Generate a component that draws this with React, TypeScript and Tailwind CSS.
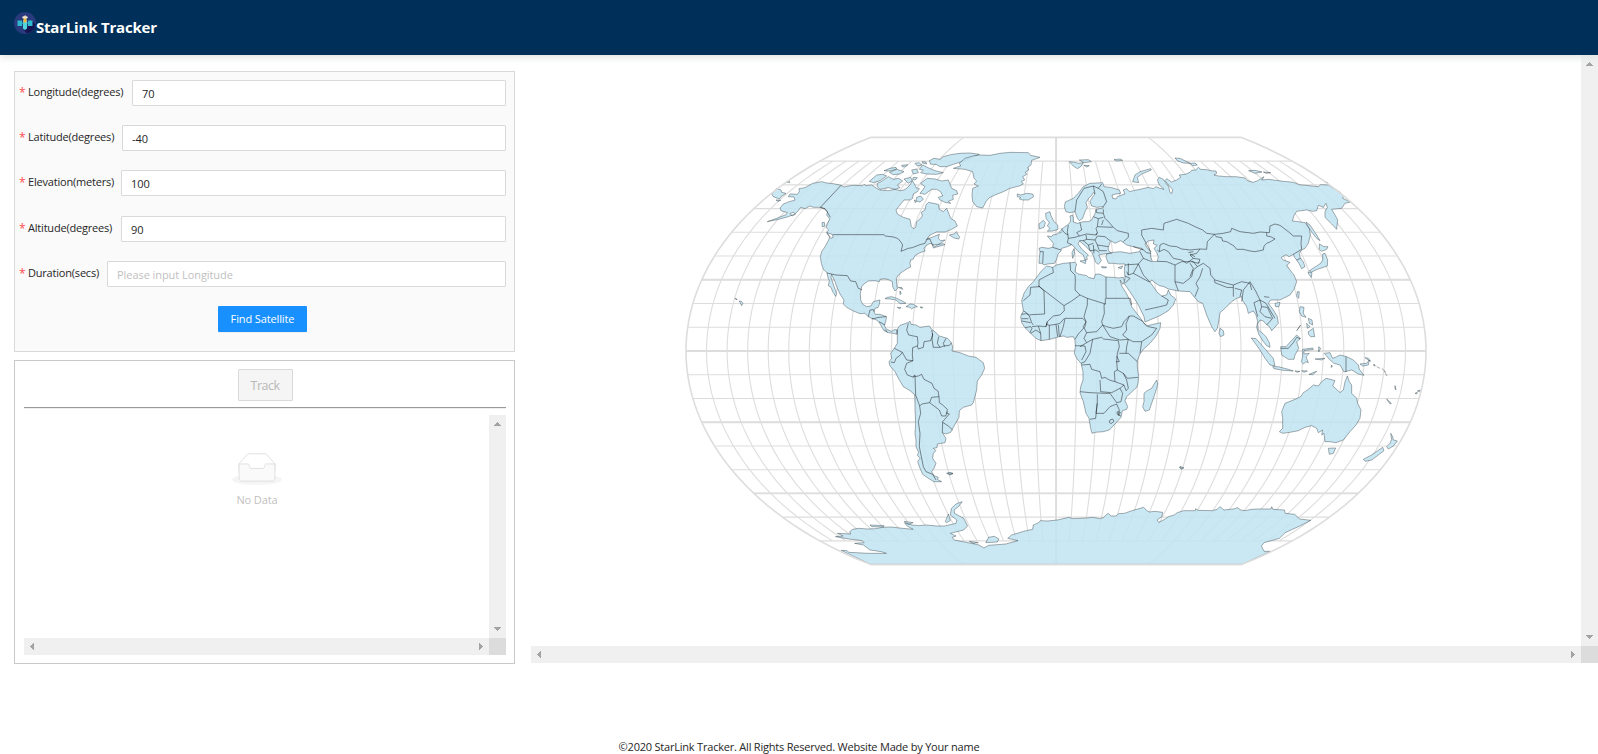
import React from "react";

const CX = 1056;
const CY = 351;
const SCALE = 136;
const RAD = Math.PI / 180;

// Kavrayskiy VII projection
function project(lon: number, lat: number): string {
  const l = lon * RAD;
  const p = lat * RAD;
  const x = ((3 * l) / (2 * Math.PI)) * Math.sqrt((Math.PI * Math.PI) / 3 - p * p);
  return `${(CX + SCALE * x).toFixed(2)},${(CY - SCALE * p).toFixed(2)}`;
}

function meridian(lon: number, limit: number): string {
  const pts: string[] = [];
  for (let lat = -limit; lat <= limit; lat += 2.5) pts.push(project(lon, lat));
  return "M" + pts.join("L");
}

function parallel(lat: number): string {
  return `M${project(-180, lat)}L${project(180, lat)}`;
}

function buildGraticule(): string {
  let d = "";
  for (let lon = -170; lon < 180; lon += 10) d += meridian(lon, lon % 90 === 0 ? 90 : 80);
  for (let lat = -80; lat <= 80; lat += 10) d += parallel(lat);
  return d;
}

function buildOutline(): string {
  return meridian(-180, 90) + "L" + meridian(180, 90).slice(1).split("L").reverse().join("L") + "Z";
}

const graticule = buildGraticule();
const majorLines = meridian(0, 90) + [-60, -30, 0, 30].map(parallel).join("");
const outline = buildOutline();

type Region = { at: string; land: string; borders: string };

const regions: Region[] = [
  {
    at: "translate(680 120) scale(0.33333)",
    land:
      "M357 206L375 203 398 190 425 185 440 189 460 191 483 196 492 201 505 198 520 196 548 197 552 193 558 197 575 195 590 205 600 210 625 212 645 208 660 212 672 210 680 205 690 195 697 182 705 195 708 203 718 206 712 215 700 222 698 235 690 240 672 240 660 255 648 270 652 282 670 292 690 298 694 320 700 326 707 322 710 305 720 297 727 288 724 277 735 270 738 255 745 247 760 250 775 253 778 268 790 275 800 265 806 280 812 295 825 303 832 318 815 328 795 336 770 336 750 345 740 358 760 350 778 343 775 355 782 362 795 360 785 368 764 380 758 372 750 370 738 377 732 385 735 393 720 398 705 407 700 417 692 420 690 430 692 441 680 447 665 457 655 465 649 475 650 490 652 506 645 513 638 500 637 485 628 480 615 476 600 478 598 485 585 482 565 483 552 492 545 500 541 520 542 540 548 553 560 560 573 558 580 545 600 540 598 552 594 563 585 565 582 575 586 583 600 583 620 590 617 605 613 617 620 628 635 634 645 628 652 632 652 643 640 640 625 638 612 632 605 620 598 608 590 600 575 595 565 590 555 580 540 581 520 573 500 562 490 552 492 540 480 522 470 500 465 485 458 470 455 463 453 472 458 487 463 502 470 520 467 529 458 515 453 502 445 497 448 482 443 470 441 458 430 448 424 430 421 410 425 395 435 380 445 362 450 350 440 336 446 330 438 322 443 310 449 297 440 285 443 275 435 268 420 262 400 262 390 258 375 266 362 262 355 272 345 282 325 290 300 297 262 305 290 295 318 284 322 278 303 272 300 264 310 252 325 246 345 240 342 231 325 230 330 222 352 223 358 215Z" +
      "M275 222L290 205 303 210 305 217 318 220 303 230 298 237 280 230ZM318 187L327 183 330 187ZM288 240L302 241 294 244ZM330 280L342 277 346 283 336 288Z" +
      "M426 308L433 307 434 318 427 321ZM440 338L455 342 460 352 452 355 444 345Z" +
      "M568 184L590 165 608 163 620 168 600 182 580 188ZM592 190L605 184 625 170 640 178 655 175 668 183 652 195 660 203 645 208 625 203 600 208 592 200Z" +
      "M612 152L630 145 648 142 650 147 630 153ZM628 157L650 148 672 155 660 162 640 164ZM665 136L683 134 676 140 668 141ZM705 130L718 128 725 135 712 138ZM695 150L710 147 715 158 700 162ZM672 177L692 172 697 182 685 190ZM700 172L712 173 706 180 698 178ZM728 135L748 145 765 152 790 158 770 163 740 162 722 158 730 150 718 148ZM726 125L738 126 740 132 730 130Z" +
      "M748 122L762 115 780 118 790 110 812 104 840 100 870 99 898 103 880 110 865 117 845 125 820 133 800 140 780 140 768 133 752 133Z" +
      "M722 190L735 180 742 175 765 177 785 183 805 180 810 192 815 205 830 212 833 222 818 226 820 238 805 244 812 250 795 247 780 240 775 232 788 228 782 215 770 208 755 208 745 215 735 223 720 220 728 210 735 200ZM710 232L722 228 730 238 720 246 708 243ZM703 240L709 245 706 248Z" +
      "M808 345L822 342 830 335 834 345 839 350 836 357 822 354ZM757 375L775 373 790 371 795 374 770 381 760 384Z" +
      "M165 535L172 538 168 539ZM178 543L184 544 189 550 185 557 181 549Z" +
      "M615 536L622 532 635 530 650 535 665 542 678 550 660 551 648 540 630 537ZM678 560L690 552 700 553 712 560 700 563 695 567 690 562ZM652 562L663 563 658 566ZM720 561L729 562 726 565ZM655 502L666 503 668 508ZM660 513L664 520 660 524Z",
    borders:
      "M483 196L421 262 435 266 443 278 451 292M458 344L612 344 616 348 640 351 652 355 660 362 668 375 663 394 685 385 697 383 720 374 735 370 741 357 750 357 757 375M441 459L468 465 502 467 512 483 527 485 535 505 546 509M565 590L570 570 580 569 583 575M575 597L597 592 618 590M597 605L615 615M615 628L622 637M651 628L651 642",
  },
  {
    at: "translate(860 280) scale(0.33333)",
    land:
      "M113 146L120 136 132 132 143 128 150 124 153 133 168 135 180 142 208 138 214 147 228 158 238 168 262 175 272 185 278 200 276 213 300 218 325 228 348 232 370 248 374 265 365 285 352 303 350 330 340 368 335 375 310 382 298 392 297 412 285 433 272 457 258 462 247 458 258 475 255 488 232 492 231 503 220 505 228 512 220 520 218 535 228 550 222 565 215 575 222 587 235 592 232 598 245 605 222 605 205 595 188 583 178 560 173 545 180 535 172 525 176 517 168 500 168 480 165 460 167 430 165 385 165 345 150 332 130 320 118 300 105 275 90 258 87 245 95 235 92 220 103 205 112 190 112 165Z" +
      "M260 580L270 577 279 580 270 585Z",
    borders:
      "M145 130L140 150 146 165 160 168 172 170 174 190 172 198 158 203 157 225 159 242 140 240 127 217 103 205M92 246L103 248 108 235 120 226 127 217M159 242L140 250 134 268 142 285 158 291 165 285 167 345M158 291L175 288 185 283 192 298 216 310 222 325 234 333 237 350 215 352 209 368 186 372 179 378 167 345M179 378L182 400 175 425 180 460 178 500 184 530 190 560 198 575 218 583 228 600M172 198L175 207 190 202 192 185 212 182 218 165 215 150M218 160L216 178 220 202 240 202 252 198 268 196 275 188M236 170L232 190 240 202M258 175L250 190 254 200M237 350L238 368 248 375 262 388 260 400 268 402M209 368L238 390 245 408 257 408 262 395M268 402L248 425 247 458M248 427L265 438 278 450",
  },
  {
    at: "translate(1010 180) scale(0.33333)",
    land:
      "M110 258L128 262 140 255 160 250 182 248 195 247 200 252 197 262 195 275 205 282 230 287 235 292 252 296 256 283 268 282 288 291 310 292 325 294 340 292 344 305 338 313 334 305 330 300 335 318 348 338 358 358 365 380 380 400 392 415 402 430 410 438 425 434 452 428 450 445 438 468 420 490 400 508 390 522 382 542 382 560 386 590 384 612 380 622 350 650 345 662 353 680 350 688 337 692 333 712 312 735 298 750 280 755 255 757 246 760 242 745 237 715 228 700 220 665 210 638 212 620 219 600 219 575 213 550 200 535 193 520 196 500 195 480 190 470 170 472 162 468 148 470 120 478 93 482 78 475 62 460 45 443 35 428 32 410 40 392 35 362 42 340 55 320 70 305 85 285 95 272Z" +
      "M440 600L443 612 440 625 432 650 418 690 405 694 398 680 402 665 402 640 412 632 425 625Z",
    borders:
      "M128 262L130 278 115 285 100 293 87 300 87 320 62 322 60 345 40 362M85 318L162 377 163 392 150 405 130 408 112 425 108 440M87 318L102 332 104 402 65 404 58 405 40 392M162 377L185 363 210 345 195 330 196 300 195 285 182 272 180 248M210 345L232 355 286 372M288 291L288 355 361 355M286 355L286 372 282 373 283 400 275 425 278 435M232 355L232 375 222 410 228 425 218 415 165 415 160 440 150 470M34 403L50 401 58 408 65 428 70 435M35 416L55 416M35 423L62 428M45 443L62 440 66 445 60 458M66 440L85 438 92 460 93 482M62 460L78 450 92 460M108 432L118 436 118 478M85 438L108 440 112 425M118 436L138 433 143 470M145 435L148 470M138 433L150 430 163 415M228 425L225 440 205 462 195 478M228 425L220 440 230 458 222 475 230 488 248 478 275 472 280 477M278 435L260 455 230 458M278 435L290 440 310 445 335 440 342 425M278 435L300 470 330 480 355 478 370 485 395 485 425 465 440 445 415 440 400 428M342 425L358 408 370 408 400 425M361 355L365 375M358 408L348 432 350 450 338 465 355 478M248 478L240 520 225 545 213 550M195 497L225 498 228 515 215 540M230 488L210 500M280 477L325 482 328 500 322 520 320 545 322 570 313 575 315 605 298 600 285 592 275 595 270 575 245 568 240 553 215 555M328 520L355 520 382 545M355 478L350 500 348 520M395 485L390 520M320 528L328 545 318 545M322 570L340 580 352 595 384 592M340 580L350 600 355 625 348 632 342 615 315 605M270 600L272 635 305 638 330 625 342 615M210 635L240 638 285 640 300 640M262 643L262 665 257 715 240 718M262 670L258 700 282 700 300 680 320 672 328 690 325 705 333 708M300 640L320 668 333 665 338 640 330 625M300 720L308 717 312 724 303 731 298 727Z M322 695L331 697 327 706 321 702Z",
  },
  {
    at: "translate(960 120) scale(0.33333)",
    land:
      "M428 188L432 200 455 203 478 210 482 220 468 222 456 225 458 235 468 237 472 230 485 225 495 222 490 210 500 206 508 215 520 212 540 208 565 202 580 206 588 200 600 205 612 208 598 195 592 180 598 172 610 178 618 190 626 200 630 218 636 220 638 208 630 200 615 182 620 176 635 186 650 180 662 172 658 165 675 163 690 157 695 151 707 150 715 142 722 148 740 149 752 152 768 153 770 160 762 165 775 168 800 170 828 170 855 174 862 182 880 187 893 182 912 170 905 180 925 178 940 180 970 184 1000 187 1018 194 1075 200 1082 194 1105 195 1118 204 1130 210 1142 218 1150 230 1148 235 1172 246 1155 250 1145 265 1115 268 1125 285 1133 300 1130 328 1115 312 1095 292 1095 275 1102 262 1098 250 1090 262 1075 256 1070 272 1058 274 1040 270 1010 274 1002 287 997 303 1015 305 1035 308 1048 325 1051 345 1045 370 1035 385 1025 390 1018 400 1020 412 1030 426 1035 440 1025 446 1018 432 1010 420 1004 412 1000 403 987 410 978 404 963 413 970 420 990 427 980 437 990 450 1002 465 1010 485 1002 508 990 525 960 540 932 540 925 550 940 570 952 590 955 610 935 632 930 622 918 612 910 603 900 600 893 612 895 630 908 640 918 650 928 668 930 682 920 677 908 662 896 642 890 622 893 605 888 585 880 573 865 580 860 560 848 542 845 530 830 535 815 545 795 565 780 578 777 600 772 625 765 635 755 620 740 585 728 550 715 545 702 530 690 515 655 513 625 507 612 500 598 497 585 488 575 480 570 486 580 500 592 517 605 528 620 525 625 510 632 525 647 537 640 555 625 572 600 587 555 606 552 590 535 555 510 515 492 490 495 475 493 450 495 432 475 432 460 430 445 430 438 412 440 402 452 398 480 395 510 400 538 395 545 385 520 380 500 375 482 362 465 370 452 362 445 382 445 392 455 400 430 402 416 405 424 422 415 433 407 427 402 412 396 398 390 392 375 377 362 366 358 364 354 372 366 388 385 405 380 410 382 418 375 420 370 405 355 395 342 380 335 374 322 380 305 385 303 393 294 402 290 418 283 430 262 432 252 435 246 430 237 430 238 415 240 395 237 385 245 382 265 385 278 382 280 370 272 360 262 348 275 350 278 345 290 343 300 335 308 325 322 315 330 308 332 300 330 288 338 285 340 295 340 306 352 310 370 305 385 305 395 300 400 290 405 282 408 268 430 264 428 260 410 262 395 258 390 245 398 230 405 222 400 218 395 226 386 235 378 248 382 262 375 275 368 295 358 302 352 295 345 275 330 278 318 275 313 260 316 246 340 235 355 220 370 200 390 190ZM565 363L582 360 580 372 592 376 582 385 590 398 595 410 592 424 578 425 572 412 572 395 560 382 555 372Z" +
      "M-2 130L15 115 38 108 60 105 90 106 120 100 150 97 205 98 212 106 240 112 215 121 213 135 203 142 206 150 196 156 200 163 188 170 194 180 184 184 190 192 178 198 150 205 130 215 105 225 88 233 78 245 68 264 50 260 38 245 36 225 38 205 55 198 42 192 50 183 42 175 38 155 15 148 -20 145 2 138Z" +
      "M172 222L182 225 200 220 218 222 221 230 205 240 188 240 178 237 182 232 172 230ZM328 125L345 127 355 130 370 128 362 140 352 146 340 138ZM358 120L385 119 394 125 372 128ZM372 136L388 137 380 141ZM462 119L480 117 488 121 470 123ZM518 185L525 165 540 155 572 146 574 150 545 162 532 172 536 188ZM645 114L660 115 690 130 670 129 652 122ZM690 130L705 129 712 135 698 137Z" +
      "M866 152L885 151 906 156 885 160ZM910 156L932 158 920 160ZM1092 184L1103 188 1096 187Z" +
      "M257 280L270 275 272 285 282 305 293 315 294 328 278 333 262 334 270 325 262 318 268 308 258 295ZM237 312L250 301 256 308 252 322 238 327Z" +
      "M342 386L344 400 338 415 336 398ZM360 423L378 421 376 431ZM424 440L440 441 438 444 426 443ZM474 443L488 438 484 446Z" +
      "M1038 306L1050 315 1060 330 1070 345 1080 362 1070 355 1058 340 1045 322ZM1078 372L1092 380 1104 380 1100 388 1085 394 1078 388ZM1088 402L1095 400 1103 420 1102 438 1090 442 1072 448 1055 456 1048 452 1070 438 1082 430 1088 420ZM1044 456L1056 458 1054 472 1046 462Z" +
      "M1012 515L1018 515 1016 535 1010 528ZM945 550L960 547 957 560 947 560ZM780 625L790 632 792 645 782 650 777 640Z",
    borders:
      "M345 275L350 240 372 205 400 198 405 222M400 198L415 205 425 192M415 205L430 215 440 245 428 262M408 268L410 278 430 280 430 268M430 280L435 295 450 310 458 320 472 332 505 340 505 352 490 365M400 290L415 296 430 292M415 296L412 320 408 325 412 338 408 345M412 320L458 322M360 308L365 330 350 338 358 348M325 315L322 335 325 355 345 352 358 348 380 342 408 345 412 338M325 355L322 368 335 374M358 362L370 362 380 358 378 345M380 358L405 360 412 348M412 348L435 350 450 362M405 360L412 375 445 380M412 375L418 392 440 392M370 362L385 375 400 370M385 375L390 392 408 390 418 398M400 375L402 400M303 325L315 340 325 345M300 340L305 335M278 382L303 390M240 395L250 395 248 430" +
      "M565 382L545 345 545 330 575 325 610 330 612 310 650 298 685 310 705 320 728 330 740 340 763 343 742 365 740 388 720 387 690 390 665 387 650 380 630 378 610 370 600 375 598 395 592 390M598 395L612 388 625 395 640 415 665 420 680 430 700 415 690 405 710 400 720 387M700 415L720 418 715 430M540 395L550 415 575 425M545 385L560 398 572 400M520 380L550 390M550 415L535 432 495 435M535 432L550 465 570 486M535 432L520 460 505 465 500 455M495 468L510 475 500 485 495 490M520 460L568 486M592 424L620 425 645 435 645 485 655 513M645 435L665 425 700 425M645 485L670 490 695 470 700 450 712 440M700 425L712 440 730 430 750 445M763 343L768 350 785 353 788 363 800 365 822 378 830 388 850 388 870 393 885 395 910 390 912 378 920 370 930 366 945 357 932 350 920 348 920 338M763 343L790 340 812 335 815 325 840 335 880 340 900 336 928 338 930 318 945 312 960 316 985 335 1000 348 1025 348 1023 370 1025 388 1000 403M705 530L715 505 708 490 720 470 728 445M750 445L752 465 765 480 800 490 820 495 845 485 870 490 875 510M763 480L765 488 800 502 820 503 820 495M820 503L820 530M825 505L845 510 840 530M845 545L850 510 870 485 888 515 900 540 882 548 893 590M900 540L905 560 922 562 938 595 920 615M912 530L928 532M900 540L918 550 930 570 945 595M905 560L900 575 915 590 935 595M1010 420L1022 415M690 430L700 445 690 470M695 425L715 430 718 425M690 402L705 410M700 395L685 398M425 315L430 300M505 465L505 430M605 528L625 540 620 555 600 560 555 570M565 382L572 395",
  },
  {
    at: "translate(1180 240) scale(0.33333)",
    land:
      "M438 415L452 418 465 422 458 438 470 448 480 458 490 450 495 425 502 408 508 425 515 435 515 460 530 475 533 490 543 510 540 535 528 555 510 575 490 600 468 608 450 605 435 605 432 580 425 585 428 570 415 578 410 565 395 557 375 562 355 572 330 577 308 580 298 575 308 565 308 535 305 515 315 490 345 478 362 470 370 458 385 448 400 435 415 438 425 425Z" +
      "M445 625L467 624 460 640 448 643ZM632 580L638 590 640 600 652 603 640 618 625 627 620 620 630 610 635 598ZM608 622L612 632 595 645 575 660 555 664 550 658 575 645Z" +
      "M214 294L228 296 245 315 262 335 280 355 285 378 270 375 255 355 240 330ZM278 380L295 380 325 388 340 393 310 391 282 386ZM345 393L360 394 352 397ZM365 392L382 393 372 397ZM387 403L410 394 398 404Z" +
      "M302 320L318 320 338 298 350 285 362 296 350 305 356 325 345 345 342 358 325 358 305 345ZM368 328L398 324 400 328 372 332 372 342 388 340 378 350 385 368 378 365 370 372 364 365 368 350ZM416 320L422 325 416 336ZM405 357L435 355 425 360ZM455 375L457 380 453 382Z" +
      "M433 340L450 338 458 355 470 350 480 345 500 350 520 360 535 375 538 388 552 406 535 402 515 390 492 396 480 375 462 370 448 358ZM540 372L560 370 568 360 565 375 548 378ZM555 353L565 355 572 364 565 360ZM582 372L586 378 581 377ZM590 380L600 385M605 385L617 395M613 393L621 408M645 437L648 450 645 445ZM620 477L634 490 630 492ZM705 460L712 457 710 462ZM712 453L721 450 718 455Z" +
      "M360 200L372 202 370 220 378 232 365 228 358 215ZM385 235L396 240 398 255 388 250ZM380 250L390 260 382 265ZM385 275L400 265 404 290 392 290 385 282ZM350 272L362 255 352 270Z" +
      "M-2 682L10 683 4 687Z",
    borders: "M498 350L498 396M302 325L325 325 340 308 350 292 360 296",
  },
  {
    at: "translate(780 460) scale(0.3827 0.33333)",
    land:
      "M160 271L175 272 180 277 230 280 278 280 265 275 235 270 218 255 195 250 220 248 215 242 180 237 145 230 165 228 150 220 185 222 182 215 190 208 205 205 228 207 250 206 268 202 290 201 320 205 348 208 332 198 325 188 345 195 362 197 380 195 410 198 430 198 460 190 462 180 445 165 448 145 460 132 476 125 468 138 455 150 456 160 480 175 490 198 480 210 445 220 460 228 450 232 455 240 500 250 520 255 533 264 545 256 590 252 622 242 595 235 605 225 640 213 660 208 662 195 676 188 680 182 700 183 725 180 755 172 765 176 800 174 818 172 835 176 845 173 852 165 858 160 865 168 878 168 885 161 900 160 920 152 950 142 958 151 965 156 980 154 1000 157 998 170 985 180 990 187 1005 178 1015 170 1030 165 1038 158 1055 152 1085 152 1086 146 1092 151 1130 152 1142 148 1150 140 1160 150 1185 147 1195 143 1204 150 1215 152 1232 148 1250 147 1283 147 1285 140 1288 148 1318 150 1320 160 1345 163 1358 177 1387 181 1360 197 1320 218 1305 235 1265 248 1258 258 1265 274 1281 274 1208 313 236 313Z" +
      "M432 185L440 162 445 182 435 188ZM235 195L272 197 270 201 240 200ZM325 184L348 188 335 193ZM495 244L518 248 505 250ZM538 248L545 232 560 229 572 237 568 246ZM438 39L452 41 442 44ZM1046 19L1055 24 1048 27Z",
    borders: "",
  },
];

function WorldMap() {
  return (
    <svg className="block shrink-0" width="1050" height="591" viewBox="531 55 1050 591">
      <path d={graticule} fill="none" stroke="#dddddd" strokeWidth="1.1" />
      <path d={majorLines} fill="none" stroke="#dddddd" strokeWidth="1.9" />
      {regions.map((r) => (
        <g key={r.at} transform={r.at} strokeLinejoin="round">
          <path
            d={r.land}
            fill="#c1e3f2"
            fillOpacity="0.86"
            fillRule="evenodd"
            stroke="#1c2a30"
            strokeOpacity="0.42"
            strokeWidth="0.9"
            vectorEffect="non-scaling-stroke"
          />
          <path
            d={r.borders}
            fill="none"
            stroke="#000"
            strokeOpacity="0.55"
            strokeWidth="0.8"
            vectorEffect="non-scaling-stroke"
          />
        </g>
      ))}
      <path d={outline} fill="none" stroke="#dddddd" strokeWidth="1.6" />
    </svg>
  );
}

function Arrow({ d }: { d: string }) {
  return (
    <svg width="17" height="17" viewBox="0 0 17 17" className="block shrink-0" shapeRendering="crispEdges">
      <path d={d} fill="#a3a3a3" />
    </svg>
  );
}

function VBar() {
  return (
    <div className="flex w-[17px] shrink-0 flex-col justify-between bg-[#f0f0f0]">
      <Arrow d="M5 11h7L8.500 7z" />
      <Arrow d="M5 6h7L8.500 10z" />
    </div>
  );
}

function HBar() {
  return (
    <div className="flex h-[17px] shrink-0">
      <div className="flex flex-1 justify-between bg-[#f0f0f0]">
        <Arrow d="M10 5v7L6 8.500z" />
        <Arrow d="M7 5v7L11 8.500z" />
      </div>
      <div className="w-[17px] bg-[#dcdcdc]" />
    </div>
  );
}

function Logo() {
  return (
    <svg width="22" height="22" viewBox="0 0 22 22" className="mt-3 block shrink-0">
      <circle cx="11" cy="11" r="11" fill="#283a7c" />
      <path d="M12 17L18.500 9l3 3.500A11 11 0 0 1 13 21.500L10 18z" fill="#161550" />
      <path d="M3.500 8.500h4.500v5.500h-4.500zM14 8.500h4.500v5.500h-4.500z" fill="#2fb9cf" />
      <path d="M8 10.500h6v1.500H8z" fill="#1f8fae" />
      <path d="M9 8h4v8.500l-2 1.500-2-1.500z" fill="#52d6de" />
      <path d="M9.500 6h3v4.500h-3z" fill="#f2b53a" />
      <path d="M8 5q3-2 6 0l-1 1.500H9z" fill="#f4ead0" />
      <path d="M10.700 3h.8v3h-.8z" fill="#e8d9b5" />
    </svg>
  );
}

function EmptyIcon() {
  return (
    <svg width="50" height="32" viewBox="0 0 64 41" className="block">
      <g transform="translate(0 1)" fill="none" fillRule="evenodd">
        <ellipse fill="#F5F5F5" cx="32" cy="33" rx="32" ry="7" />
        <g stroke="#D9D9D9" fillRule="nonzero">
          <path d="M55 12.76L44.854 1.258C44.367.474 43.656 0 42.907 0H21.093c-.749 0-1.46.474-1.947 1.257L9 12.761V22h46v-9.240z" />
          <path
            d="M41.613 15.931c0-1.605.994-2.930 2.227-2.931H55v18.137C55 33.260 53.680 35 52.050 35h-40.100C10.320 35 9 33.259 9 31.137V13h11.160c1.233 0 2.227 1.323 2.227 2.928v.022c0 1.605 1.005 2.901 2.237 2.901h14.752c1.232 0 2.237-1.308 2.237-2.913v-.007z"
            fill="#FAFAFA"
          />
        </g>
      </g>
    </svg>
  );
}

function Field({ label, value, width, gap }: { label: string; value?: string; width: string; gap: string }) {
  return (
    <div className={`flex h-[26px] ${gap}`}>
      <label className={`flex shrink-0 items-center pb-px text-[11px] tracking-[-0.2px] whitespace-nowrap ${width}`}>
        <span className="w-[9px] pt-px text-[12px] text-[#ff4d4f]">*</span>
        {label}
      </label>
      <input
        className="h-[26px] min-w-0 flex-1 rounded-[1px] border border-[#d9d9d9] bg-white px-[9px] text-[11px] tracking-[-0.06px] outline-none placeholder:text-[#bfbfbf]"
        defaultValue={value}
        placeholder="Please input Longitude"
      />
    </div>
  );
}

export default function App() {
  return (
    <div className="flex h-[754px] w-[1598px] flex-col overflow-hidden bg-white font-['Open_Sans','Noto_Sans',sans-serif] text-[11px] text-[#262626]">
      <header className="z-10 flex h-[55px] shrink-0 bg-[#002f5a] pl-[14px] shadow-[0_2px_8px_#dfe0e1]">
        <Logo />
        <h1 className="pt-[16px] text-[15px] leading-[23px] font-bold tracking-[-0.2px] text-white">StarLink Tracker</h1>
      </header>

      <main className="flex h-[609px] shrink-0">
        <section className="ml-[14px] flex w-[501px] shrink-0 flex-col pt-4">
          <form className="h-[281px] border border-[#d9d9d9] bg-[#fafafa] pt-2 pr-2 pl-1">
            <Field label="Longitude(degrees)" value="70" width="w-[113px]" gap="mb-[19px]" />
            <Field label="Latitude(degrees)" value="-40" width="w-[103px]" gap="mb-[19px]" />
            <Field label="Elevation(meters)" value="100" width="w-[102px]" gap="mb-[20px]" />
            <Field label="Altitude(degrees)" value="90" width="w-[102px]" gap="mb-[19px]" />
            <Field label="Duration(secs)" width="w-[88px]" gap="mb-[19px]" />
            <button
              type="button"
              className="ml-[199px] block h-[26px] w-[89px] rounded-[1px] bg-[#1890ff] text-[11px] tracking-[-0.12px] text-white shadow-[0_1px_0_rgba(0,0,0,0.045)]"
            >
              Find Satellite
            </button>
          </form>

          <div className="mt-2 flex h-[304px] flex-col border border-[#c9c9c9] pt-2 pr-2 pl-[9px]">
            <button
              type="button"
              disabled
              className="mx-auto h-[32px] w-[55px] shrink-0 rounded-[1px] border border-[#d9d9d9] bg-[#f5f5f5] pt-0.5 text-[12.500px] tracking-[-0.5px] text-[#b8b8b8]"
            >
              Track
            </button>
            <div className="mt-[6px] h-[2px] shrink-0 border-t border-b border-t-[#9a9a9a] border-b-[#eeeeee]" />
            <div className="mt-[6px] flex h-[240px] flex-col">
              <div className="flex flex-1">
                <div className="flex flex-1 flex-col items-center pt-[38px] pl-[1px] text-[#bfbfbf]">
                  <EmptyIcon />
                  <p className="mt-[6px] leading-[18px] tracking-[-0.1px]">No Data</p>
                </div>
                <VBar />
              </div>
              <HBar />
            </div>
          </div>
        </section>

        <section className="ml-4 flex w-[1067px] shrink-0 flex-col">
          <div className="flex h-[591px] shrink-0">
            <WorldMap />
            <VBar />
          </div>
          <HBar />
        </section>
      </main>

      <footer className="flex flex-1 items-end justify-center">
        <p className="mb-[-2px] leading-[18px] tracking-[-0.21px]">
          ©2020 StarLink Tracker. All Rights Reserved. Website Made by Your name
        </p>
      </footer>
    </div>
  );
}
